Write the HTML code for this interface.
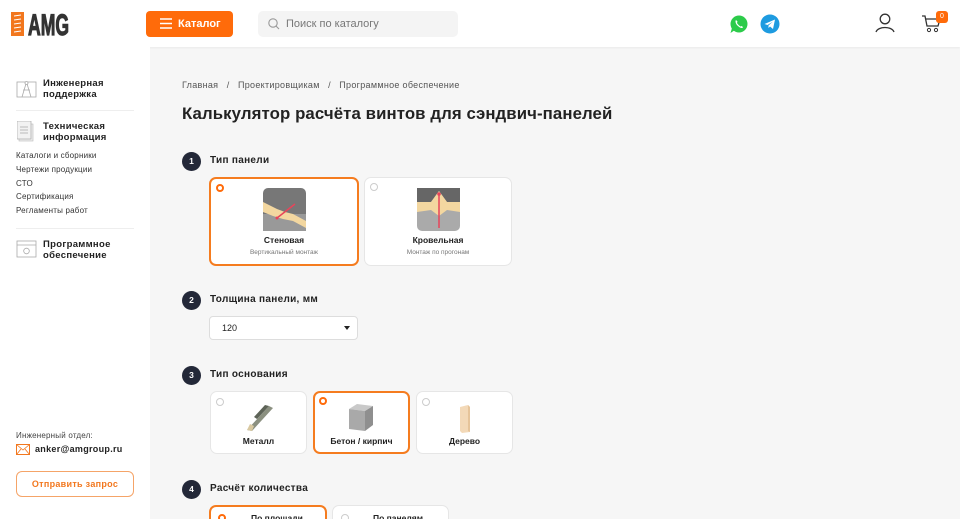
<!DOCTYPE html>
<html><head><meta charset="utf-8"><style>
*{box-sizing:border-box;margin:0;padding:0}
html{width:960px;height:519px;overflow:hidden}
body{width:960px;height:519px;overflow:hidden;background:#f6f6f6;font-family:"Liberation Sans","Noto Sans CJK SC",sans-serif;color:#222;position:relative}
.hdr{position:absolute;left:0;top:0;width:960px;height:47px;background:#fff;box-shadow:0 1px 2px rgba(0,0,0,.05)}
.side{position:absolute;left:0;top:47px;width:150px;height:472px;background:#fff}
.abs{position:absolute}
.cat{left:146px;top:11px;width:87px;height:26px;background:#ff6b0a;border-radius:4px;color:#fff;font-weight:bold;font-size:11px;line-height:26px;padding-left:32px}
.search{left:258px;top:11px;width:200px;height:26px;background:#f4f4f4;border-radius:5px;font-size:11px;color:#777;line-height:26px;padding-left:28px}
.sh{font-weight:bold;font-size:9.5px;line-height:11px;color:#222;letter-spacing:.3px}
.sl{font-size:8px;color:#333;letter-spacing:.2px}
.hr{height:1px;background:#eee;width:118px;left:16px}
.num{width:19px;height:19px;border-radius:50%;background:#232838;color:#fff;font-size:8.5px;font-weight:bold;text-align:center;line-height:19px}
.st{font-weight:bold;font-size:10px;letter-spacing:.3px}
.card{background:#fff;border:1px solid #e6e6e6;border-radius:7px}
.card.on{border:2px solid #f57c1f}
.rad{width:8px;height:8px;border-radius:50%;border:1px solid #ccc;background:#fff}
.rad.on{border:2.5px solid #ff6b0a}
.ct{font-weight:bold;font-size:8.5px;text-align:center;width:100%;position:absolute}
.cs{font-size:6.5px;color:#777;text-align:center;width:100%;position:absolute}
</style></head><body>
<div class="hdr"></div>
<div class="side"></div>
<!-- logo -->
<svg class="abs" style="left:11px;top:11px" width="60" height="26"><rect x="0" y="1" width="13" height="24" fill="#f2771e"/><g stroke="#fff" stroke-width="1"><line x1="3" y1="5" x2="10" y2="4"/><line x1="3" y1="9" x2="10" y2="8"/><line x1="3" y1="13" x2="10" y2="12"/><line x1="3" y1="17" x2="10" y2="16"/><line x1="3" y1="21" x2="10" y2="20"/></g><text x="17" y="24" font-family="Liberation Sans" font-weight="bold" font-size="30" fill="#333" stroke="#333" stroke-width="1.2" textLength="41" lengthAdjust="spacingAndGlyphs">AMG</text></svg>
<div class="abs cat">Каталог</div>
<svg class="abs" style="left:160px;top:18px" width="12" height="11"><g stroke="#fff" stroke-width="1.5"><line x1="0" y1="1" x2="12" y2="1"/><line x1="0" y1="5.5" x2="12" y2="5.5"/><line x1="0" y1="10" x2="12" y2="10"/></g></svg>
<div class="abs search">Поиск по каталогу</div>
<svg class="abs" style="left:268px;top:18px" width="12" height="12"><circle cx="5" cy="5" r="4.2" fill="none" stroke="#999" stroke-width="1.1"/><line x1="8" y1="8" x2="11" y2="11" stroke="#999" stroke-width="1.1"/></svg>
<svg class="abs" style="left:729px;top:14px" width="20" height="20"><circle cx="10" cy="10" r="8.5" fill="#2ccb4a"/><path d="M1.5 19 L3 14 L6 16Z" fill="#2ccb4a"/><path d="M7 6 C6 7 6.5 10 9 12 C11 14 13 14.5 14 13.5 L13 12 L11.5 12.5 C10.5 12 8.5 10 8 9 L8.5 7.5 Z" fill="#fff"/></svg>
<svg class="abs" style="left:760px;top:14px" width="20" height="20"><circle cx="10" cy="10" r="9.5" fill="#1e9be0"/><path d="M4.5 10 L15 5.5 L13 15 L10 12.5 L8.5 14 L8.5 11.5 L13 7.5 L7.5 11 Z" fill="#fff"/></svg>
<svg class="abs" style="left:874px;top:13px" width="22" height="20"><circle cx="11" cy="6" r="4.8" fill="none" stroke="#333" stroke-width="1.3"/><path d="M2 19 C4 13 18 13 20 19" fill="none" stroke="#333" stroke-width="1.3"/></svg>
<svg class="abs" style="left:921px;top:15px" width="22" height="18"><path d="M1 1 L4 1 L6 11 L17 11 L19 4 L5 4" fill="none" stroke="#333" stroke-width="1.3"/><circle cx="8" cy="15" r="1.6" fill="none" stroke="#333"/><circle cx="15" cy="15" r="1.6" fill="none" stroke="#333"/></svg>
<div class="abs" style="left:936px;top:11px;width:12px;height:12px;border-radius:3px;background:#ff6b0a;color:#fff;font-size:7px;text-align:center;line-height:12px">0</div>

<!-- sidebar -->
<svg class="abs" style="left:16px;top:80px" width="21" height="19"><rect x="1" y="2" width="19" height="15" fill="none" stroke="#aaa" stroke-width=".8"/><path d="M10.5 2 L6 17 M10.5 2 L15 17 M7 10 L14 10" stroke="#aaa" stroke-width=".8" fill="none"/><circle cx="10.5" cy="3" r="1.5" fill="#fff" stroke="#aaa" stroke-width=".8"/></svg>
<div class="abs sh" style="left:43px;top:78px">Инженерная<br>поддержка</div>
<div class="abs hr" style="top:110px"></div>
<svg class="abs" style="left:17px;top:121px" width="18" height="21"><rect x="2" y="3" width="14" height="17" fill="#eee" stroke="#bbb" stroke-width=".6"/><rect x="0" y="0" width="14" height="18" fill="#f2f2f2" stroke="#aaa" stroke-width=".7"/><g stroke="#aaa" stroke-width=".8"><line x1="3" y1="6" x2="11" y2="6"/><line x1="3" y1="9" x2="11" y2="9"/><line x1="3" y1="12" x2="11" y2="12"/></g></svg>
<div class="abs sh" style="left:43px;top:121px">Техническая<br>информация</div>
<div class="abs sl" style="left:16px;top:151px">Каталоги и сборники</div>
<div class="abs sl" style="left:16px;top:165px">Чертежи продукции</div>
<div class="abs sl" style="left:16px;top:179px">СТО</div>
<div class="abs sl" style="left:16px;top:192px">Сертификация</div>
<div class="abs sl" style="left:16px;top:206px">Регламенты работ</div>
<div class="abs hr" style="top:228px"></div>
<svg class="abs" style="left:16px;top:240px" width="21" height="19"><rect x="1" y="1" width="19" height="16" fill="none" stroke="#aaa" stroke-width=".8"/><line x1="1" y1="5" x2="20" y2="5" stroke="#aaa" stroke-width=".7"/><circle cx="10.5" cy="11" r="2.8" fill="none" stroke="#aaa" stroke-width=".8"/></svg>
<div class="abs sh" style="left:43px;top:239px">Программное<br>обеспечение</div>
<div class="abs sl" style="left:16px;top:431px;color:#444">Инженерный отдел:</div>
<svg class="abs" style="left:16px;top:444px" width="14" height="11"><rect x=".5" y=".5" width="13" height="10" fill="none" stroke="#f2771e"/><path d="M.5 .5 L7 6 L13.5 .5 M.5 10.5 L5 5 M13.5 10.5 L9 5" fill="none" stroke="#f2771e" stroke-width=".8"/></svg>
<div class="abs" style="left:35px;top:444px;font-size:9px;font-weight:bold;letter-spacing:.3px">anker@amgroup.ru</div>
<div class="abs" style="left:16px;top:471px;width:118px;height:26px;border:1px solid #f5a468;border-radius:6px;color:#f2771e;font-size:9px;font-weight:bold;text-align:center;line-height:24px;letter-spacing:.3px">Отправить запрос</div>

<!-- main -->
<div class="abs" style="left:182px;top:80px;font-size:9px;color:#555;letter-spacing:.3px">Главная &nbsp; / &nbsp; Проектировщикам &nbsp; / &nbsp; Программное обеспечение</div>
<div class="abs" style="left:182px;top:104px;font-size:16.8px;font-weight:bold;color:#222;letter-spacing:.1px">Калькулятор расчёта винтов для сэндвич-панелей</div>

<div class="abs num" style="left:182px;top:152px">1</div><div class="abs st" style="left:210px;top:155px">Тип панели</div>
<div class="abs card on" style="left:209px;top:177px;width:150px;height:89px"><div class="abs rad on" style="left:5px;top:5px"></div>
<svg class="abs" style="left:52px;top:9px" width="43" height="43"><rect width="43" height="43" rx="5" fill="#777"/><rect x="0" y="26" width="43" height="17" fill="#999"/><path d="M0 14 L14 21 L22 24 L30 26 L43 33 L43 40 L30 33 L20 31 L10 28 L0 24Z" fill="#f3d7a0"/><line x1="14" y1="30" x2="32" y2="16" stroke="#e8445a" stroke-width="1.5"/><circle cx="14" cy="30" r="1.5" fill="#e8445a"/></svg>
<div class="ct" style="top:56px">Стеновая</div><div class="cs" style="top:70px">Вертикальный монтаж</div></div>
<div class="abs card" style="left:364px;top:177px;width:148px;height:89px"><div class="abs rad" style="left:5px;top:5px"></div>
<svg class="abs" style="left:52px;top:10px" width="43" height="43"><rect width="43" height="43" rx="5" fill="#aaa"/><path d="M0 0 L43 0 L43 14 L30 14 L22 3 L14 14 L0 14Z" fill="#666"/><path d="M0 14 L14 14 L22 3 L30 14 L43 14 L43 24 L30 22 L22 28 L14 22 L0 24Z" fill="#f3d7a0"/><line x1="22" y1="6" x2="22" y2="40" stroke="#e8445a" stroke-width="1.5"/><circle cx="22" cy="6" r="1.8" fill="#e8445a"/></svg>
<div class="ct" style="top:57px">Кровельная</div><div class="cs" style="top:71px">Монтаж по прогонам</div></div>

<div class="abs num" style="left:182px;top:291px">2</div><div class="abs st" style="left:210px;top:294px">Толщина панели, мм</div>
<div class="abs" style="left:209px;top:316px;width:149px;height:24px;background:#fff;border:1px solid #ddd;border-radius:4px;font-size:9px;line-height:22px;padding-left:12px">120</div>
<div class="abs" style="left:344px;top:326px;width:0;height:0;border-left:3px solid transparent;border-right:3px solid transparent;border-top:4px solid #222"></div>

<div class="abs num" style="left:182px;top:366px">3</div><div class="abs st" style="left:210px;top:369px">Тип основания</div>
<div class="abs card" style="left:210px;top:391px;width:97px;height:63px"><div class="abs rad" style="left:5px;top:6px"></div>
<svg class="abs" style="left:32px;top:10px" width="32" height="30"><path d="M4 28 L26 4 L30 6 L9 29Z" fill="#8b9080"/><path d="M4 28 L9 29 L11 24 L7 22Z" fill="#d8c8a0"/><path d="M14 17 L26 4 L22 3 L11 15Z" fill="#5d6357"/></svg>
<div class="ct" style="top:44px">Металл</div></div>
<div class="abs card on" style="left:313px;top:391px;width:97px;height:63px"><div class="abs rad on" style="left:4px;top:4px"></div>
<svg class="abs" style="left:31px;top:10px" width="30" height="30"><path d="M3 6 L11 1 L27 3 L19 8Z" fill="#c9c9c9"/><path d="M3 6 L19 8 L19 28 L3 26Z" fill="#a9a9a9"/><path d="M19 8 L27 3 L27 22 L19 28Z" fill="#8f8f8f"/></svg>
<div class="ct" style="top:43px">Бетон / кирпич</div></div>
<div class="abs card" style="left:416px;top:391px;width:97px;height:63px"><div class="abs rad" style="left:5px;top:6px"></div>
<svg class="abs" style="left:40px;top:12px" width="16" height="30"><path d="M3 3 L11 1 L13 3 L13 28 L5 29 L3 27Z" fill="#f3d9b8"/><path d="M11 1 L13 3 L13 28 L11 27Z" fill="#e6c49a"/></svg>
<div class="ct" style="top:44px">Дерево</div></div>

<div class="abs num" style="left:182px;top:480px">4</div><div class="abs st" style="left:210px;top:483px">Расчёт количества</div>
<div class="abs card on" style="left:209px;top:505px;width:118px;height:30px"><div class="abs rad on" style="left:7px;top:7px"></div><div class="abs" style="left:40px;top:6px;font-size:8.5px;font-weight:bold">По площади</div></div>
<div class="abs card" style="left:332px;top:505px;width:117px;height:30px"><div class="abs rad" style="left:8px;top:8px"></div><div class="abs" style="left:40px;top:7px;font-size:8.5px;font-weight:bold">По панелям</div></div>
</body></html>
